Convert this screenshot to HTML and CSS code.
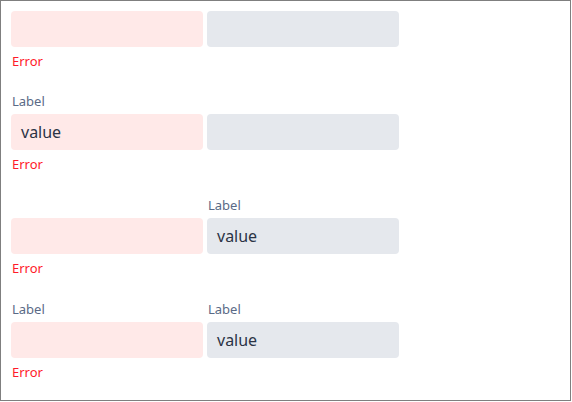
FILE: index.html
```html
<!DOCTYPE html>
<html>
<head>
<meta charset="utf-8">
<link rel="stylesheet" href="styles.css">
</head>
<body>
<div class="frame">
  <div class="row">
    <div class="inp bad"></div><div class="inp"></div>
    <span class="msg">Error</span><span class="msg"></span>
  </div>
  <div class="row">
    <span class="lbl">Label</span><span class="lbl"></span>
    <div class="inp bad"><span class="val">value</span></div><div class="inp"></div>
    <span class="msg">Error</span><span class="msg"></span>
  </div>
  <div class="row">
    <span class="lbl"></span><span class="lbl">Label</span>
    <div class="inp bad"></div><div class="inp"><span class="val">value</span></div>
    <span class="msg">Error</span><span class="msg"></span>
  </div>
  <div class="row">
    <span class="lbl">Label</span><span class="lbl">Label</span>
    <div class="inp bad"></div><div class="inp"><span class="val">value</span></div>
    <span class="msg">Error</span><span class="msg"></span>
  </div>
</div>
</body>
</html>
```
FILE: styles.css
```css
html, body {
  margin: 0;
  padding: 0;
  background: #ffffff;
}
.frame {
  box-sizing: border-box;
  width: 571px;
  height: 401px;
  border: 1px solid #7f7f7f;
  padding: 10px;
  font-family: "Noto Sans", "Open Sans", sans-serif;
}
.row {
  display: grid;
  grid-template-columns: 192px 192px;
  column-gap: 4px;
  margin-bottom: 23px;
}
.row:first-child {
  margin-bottom: 22px;
}
.lbl {
  font-size: 13px;
  line-height: 18px;
  color: #5a6a86;
  margin-bottom: 4px;
  padding-left: 1px;
}
.lbl:empty {
  margin: 0;
}
.inp {
  height: 36px;
  border-radius: 4px;
  background: #e5e8ed;
  display: flex;
  align-items: center;
  padding-left: 10px;
}
.inp.bad {
  background: #ffe9e8;
}
.val {
  font-size: 16px;
  color: #2b3445;
}
.msg {
  font-size: 13px;
  line-height: 18px;
  margin-top: 5px;
  color: #ff1a2a;
  padding-left: 1px;
}
```
